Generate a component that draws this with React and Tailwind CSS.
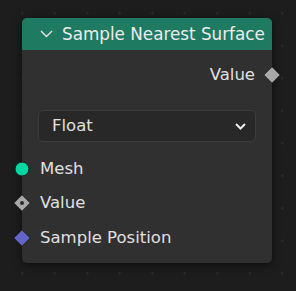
import React from 'react';

const font = { fontFamily: '"DejaVu Sans", sans-serif' };

const Diamond = ({ color, dot }) => (
  <svg width="18" height="18" viewBox="0 0 18 18" className="block h-[18px] w-[18px] shrink-0">
    <path d="M9 0.8 L17.2 9 L9 17.2 L0.8 9 Z" fill={color} stroke="#1a1a1a" strokeWidth="0.8" />
    {dot && <circle cx="9" cy="9" r="2" fill="#2a2a2a" />}
  </svg>
);

const InputRow = ({ label, socket, className }) => (
  <div className={`relative flex h-[24px] items-center pl-[18px] ${className}`}>
    <div className="absolute left-[-9px] top-1/2 flex -translate-y-1/2 items-center">{socket}</div>
    <span className="text-[16.5px] leading-none text-[#e0e0e0]">{label}</span>
  </div>
);

const App = () => {
  return (
    <div
      className="h-[291px] w-[296px] overflow-hidden bg-[#1d1d1d] bg-[radial-gradient(circle,#2b2b2b_1px,transparent_1.5px)] bg-[size:32.5px_32.5px] bg-[position:6px_-3px] pt-[18px] pl-[22px]"
      style={font}
    >
      <div className="relative h-[245px] w-[250px] rounded-[5px] bg-[#303030] shadow-[0_2px_8px_rgba(0,0,0,0.6)]">
        <div className="flex h-[32px] items-center rounded-t-[5px] bg-[#1f7a62] pl-[18px]">
          <svg width="13" height="8" viewBox="0 0 13 8" className="mr-[9px]">
            <path d="M1 1 L6.5 6.5 L12 1" fill="none" stroke="#e4e4e4" strokeWidth="1.4" />
          </svg>
          <span className="text-[16.8px] leading-none text-[#ececec]">Sample Nearest Surface</span>
        </div>

        <div className="relative mt-[13px] flex h-[24px] items-center justify-end pr-[17px]">
          <span className="text-[16.5px] leading-none text-[#e0e0e0]">Value</span>
          <div className="absolute right-[-9px] top-1/2 flex -translate-y-1/2 items-center">
            <Diamond color="#a8a8a8" />
          </div>
        </div>

        <div className="mx-[16px] mt-[23px] flex h-[32px] items-center justify-between rounded-[5px] border border-[#3d3d3d] bg-[#282828] pl-[13px] pr-[9px]">
          <span className="text-[16.5px] leading-none text-[#e0e0e0]">Float</span>
          <svg width="11" height="7" viewBox="0 0 11 7">
            <path d="M1 1 L5.5 5.5 L10 1" fill="none" stroke="#ececec" strokeWidth="2" />
          </svg>
        </div>

        <InputRow
          className="mt-[15px]"
          label="Mesh"
          socket={
            <svg width="18" height="18" viewBox="0 0 18 18" className="block h-[18px] w-[18px] shrink-0">
              <circle cx="9" cy="9" r="7" fill="#00d6a3" stroke="#1a1a1a" strokeWidth="1" />
            </svg>
          }
        />
        <InputRow className="mt-[10px]" label="Value" socket={<Diamond color="#a8a8a8" dot />} />
        <InputRow className="mt-[11px]" label="Sample Position" socket={<Diamond color="#6464c8" />} />
      </div>
    </div>
  );
};

export default App;
